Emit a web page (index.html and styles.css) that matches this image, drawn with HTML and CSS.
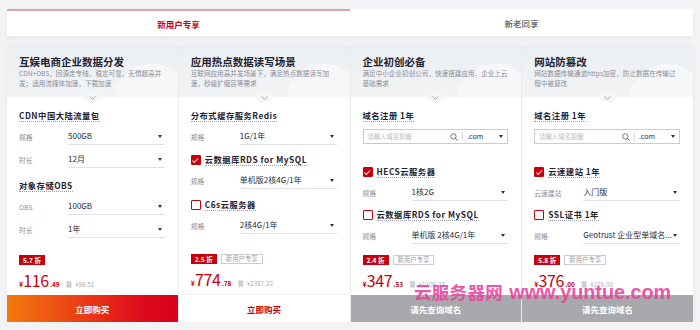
FILE: index.html
```html
<!DOCTYPE html>
<html lang="zh-CN">
<head>
    <meta charset="UTF-8">
    <title>新用户专享</title>
    <link rel="stylesheet" href="styles.css">
</head>
<body>
    <div class="page">
        <div class="tabs">
            <div class="tab active">新用户专享</div>
            <div class="tab">新老同享</div>
        </div>

        <div class="cards">
            <!-- card 1 -->
            <div class="card">
                <div class="card-head">
                    <h3>互娱电商企业数据分发</h3>
                    <p>CDN+OBS，回源走专线，稳定可靠，无惧超高并发；适用流媒体加速，下载加速</p>
                </div>
                <div class="card-body">
                    <span class="chev"><svg width="7" height="4" viewBox="0 0 7 4"><path d="M0.5 0.5 L3.5 3.3 L6.5 0.5" fill="none" stroke="#9aa0aa" stroke-width="0.9"/></svg></span>
                    <div class="sec"><span>CDN中国大陆流量包</span></div>
                    <div class="row"><span class="lbl">规格</span><span class="sel">500GB</span></div>
                    <div class="row"><span class="lbl">时长</span><span class="sel">12月</span></div>
                    <div class="sec sec-next"><span>对象存储OBS</span></div>
                    <div class="row"><span class="lbl">OBS</span><span class="sel">100GB</span></div>
                    <div class="row"><span class="lbl">时长</span><span class="sel">1年</span></div>
                    <div class="price-area">
                        <div class="tags"><span class="off">5.7 折</span></div>
                        <div class="price"><span class="cur">¥</span><span class="int">116</span><span class="dec">.49</span><span class="orig"><i>普</i>¥86.51</span></div>
                    </div>
                </div>
                <div class="buy buy-hot">立即购买</div>
            </div>

            <!-- card 2 -->
            <div class="card">
                <div class="card-head">
                    <h3>应用热点数据读写场景</h3>
                    <p>互联网应用高并发场景下，满足热点数据读写加速，秒级扩缩容等需求</p>
                </div>
                <div class="card-body">
                    <span class="chev"><svg width="7" height="4" viewBox="0 0 7 4"><path d="M0.5 0.5 L3.5 3.3 L6.5 0.5" fill="none" stroke="#9aa0aa" stroke-width="0.9"/></svg></span>
                    <div class="sec"><span>分布式缓存服务Redis</span></div>
                    <div class="row"><span class="lbl">规格</span><span class="sel">1G/1年</span></div>
                    <div class="sec sec-chk"><b class="box on"></b><span>云数据库RDS for MySQL</span></div>
                    <div class="row"><span class="lbl">规格</span><span class="sel">单机版2核4G/1年</span></div>
                    <div class="sec sec-chk2"><b class="box"></b><span>C6s云服务器</span></div>
                    <div class="row"><span class="lbl">规格</span><span class="sel">2核4G/1年</span></div>
                    <div class="price-area">
                        <div class="tags"><span class="off">2.5 折</span><span class="new">新用户专享</span></div>
                        <div class="price"><span class="cur">¥</span><span class="int">774</span><span class="dec">.78</span><span class="orig"><i>普</i>¥2387.22</span></div>
                    </div>
                </div>
                <div class="buy buy-plain">立即购买</div>
            </div>

            <!-- card 3 -->
            <div class="card">
                <div class="card-head">
                    <h3>企业初创必备</h3>
                    <p>满足中小企业初创公司，快速搭建应用，企业上云基础需求</p>
                </div>
                <div class="card-body">
                    <span class="chev"><svg width="7" height="4" viewBox="0 0 7 4"><path d="M0.5 0.5 L3.5 3.3 L6.5 0.5" fill="none" stroke="#9aa0aa" stroke-width="0.9"/></svg></span>
                    <div class="sec"><span>域名注册 1年</span></div>
                    <div class="domain">
                        <span class="ph">请输入域名前缀</span>
                        <svg class="search" width="8" height="8" viewBox="0 0 8 8"><circle cx="3.4" cy="3.4" r="2.7" fill="none" stroke="#555" stroke-width="0.8"/><path d="M5.4 5.4 L7.6 7.6" stroke="#555" stroke-width="0.9"/></svg>
                        <span class="suffix">.com</span>
                    </div>
                    <div class="sec sec-far"><b class="box on"></b><span>HECS云服务器</span></div>
                    <div class="row"><span class="lbl">规格</span><span class="sel">1核2G</span></div>
                    <div class="sec sec-chk3"><b class="box"></b><span>云数据库RDS for MySQL</span></div>
                    <div class="row"><span class="lbl">规格</span><span class="sel">单机版 2核4G/1年</span></div>
                    <div class="price-area">
                        <div class="tags"><span class="off">2.4 折</span><span class="new">新用户专享</span></div>
                        <div class="price"><span class="cur">¥</span><span class="int">347</span><span class="dec">.53</span><span class="orig"><i>普</i>¥1106.23</span></div>
                    </div>
                </div>
                <div class="buy buy-off">请先查询域名</div>
            </div>

            <!-- card 4 -->
            <div class="card">
                <div class="card-head">
                    <h3>网站防篡改</h3>
                    <p>网站数据传输通道https加密，防止数据在传输过程中被篡改</p>
                </div>
                <div class="card-body">
                    <span class="chev"><svg width="7" height="4" viewBox="0 0 7 4"><path d="M0.5 0.5 L3.5 3.3 L6.5 0.5" fill="none" stroke="#9aa0aa" stroke-width="0.9"/></svg></span>
                    <div class="sec"><span>域名注册 1年</span></div>
                    <div class="domain">
                        <span class="ph">请输入域名前缀</span>
                        <svg class="search" width="8" height="8" viewBox="0 0 8 8"><circle cx="3.4" cy="3.4" r="2.7" fill="none" stroke="#555" stroke-width="0.8"/><path d="M5.4 5.4 L7.6 7.6" stroke="#555" stroke-width="0.9"/></svg>
                        <span class="suffix">.com</span>
                    </div>
                    <div class="sec sec-far"><b class="box on"></b><span>云速建站 1年</span></div>
                    <div class="row"><span class="lbl">云速建站</span><span class="sel">入门版</span></div>
                    <div class="sec sec-chk3"><b class="box"></b><span>SSL证书 1年</span></div>
                    <div class="row"><span class="lbl">规格</span><span class="sel">Geotrust 企业型单域名...</span></div>
                    <div class="price-area">
                        <div class="tags"><span class="off">5.8 折</span><span class="new">新用户专享</span></div>
                        <div class="price"><span class="cur">¥</span><span class="int">376</span><span class="dec">.00</span><span class="orig"><i>普</i>¥276.00</span></div>
                    </div>
                </div>
                <div class="buy buy-off">请先查询域名</div>
            </div>
        </div>

        <div class="watermark">云服务器网 <span>www.yuntue.com</span></div>
    </div>
</body>
</html>
```

FILE: styles.css
```css
body { margin: 0; background: #f2f3f5; font-family: "Noto Sans CJK SC", "Noto Sans", sans-serif; color: #252b3a; }
.page { position: relative; width: 686px; padding: 9px 7px 0; }

.tabs { display: flex; height: 27px; box-shadow: 0 2px 5px rgba(0,0,0,0.06); }
.tab { flex: 1; background: #fff; display: flex; align-items: center; justify-content: center; font-size: 8.5px; color: #333; }
.tab.active { color: #c7000b; font-weight: bold; border-top: 2px solid #e0a3a6; height: 25px; }

.cards { display: grid; grid-template-columns: repeat(4, 1fr); margin-top: 9px; height: 277px; gap: 1px; background: #e9ebee; box-shadow: 0 2px 6px rgba(0,0,0,0.05); }
.card { display: flex; flex-direction: column; background: #fff; position: relative; overflow: hidden; }

.card-head { height: 52px; box-sizing: border-box; padding: 10px 12px 0; background: radial-gradient(circle at 85% 110%, #f6f7f9 0, #f6f7f9 38px, transparent 39px), linear-gradient(180deg, #eceff2, #f1f3f5); }
.card-head h3 { margin: 0; font-size: 10.5px; line-height: 13px; font-weight: bold; color: #1f2330; }
.card-head p { margin: 0; font-size: 6.6px; line-height: 10px; color: #8a8e99; }

.card-body { position: relative; flex: 1; display: flex; flex-direction: column; padding: 0 13px 0 12px; }
.chev { position: absolute; top: -3px; left: 50%; margin-left: -9px; width: 18px; height: 8px; border-radius: 0 0 9px 9px; background: #f4f5f7; display: flex; justify-content: center; align-items: center; }

.sec { display: flex; align-items: center; margin-top: 13px; font-size: 8.3px; line-height: 11px; font-weight: bold; letter-spacing: 0.5px; color: #1f2330; }
.sec span { border-bottom: 1px dotted #9ca0aa; }
.sec-next { margin-top: 12px; }
.sec-chk { margin-top: 9px; }
.sec-chk2 { margin-top: 10px; }
.sec-far { margin-top: 22px; }
.sec-chk3 { margin-top: 8px; }

.box { width: 8px; height: 8px; border: 1px solid #c7000b; border-radius: 1px; margin-right: 4px; background: #fff; position: relative; flex: none; }
.box.on { background: #c7000b; }
.box.on::after { content: ""; position: absolute; left: 2.5px; top: 0.5px; width: 2px; height: 4.5px; border: solid #fff; border-width: 0 1px 1px 0; transform: rotate(45deg); }

.row { display: flex; align-items: center; height: 17px; margin-top: 6px; }
.lbl { width: 49px; flex: none; font-size: 6.8px; color: #8a8e99; }
.sel { flex: 1; height: 16px; line-height: 16px; border-bottom: 1px solid #dfe1e6; font-size: 8px; color: #252b3a; position: relative; white-space: nowrap; overflow: hidden; padding-right: 8px; }
.sel::after { content: ""; position: absolute; right: 3px; top: 7px; border: 2.5px solid transparent; border-top: 3px solid #333; }

.domain { display: flex; align-items: center; margin-top: 7px; height: 15px; box-sizing: border-box; border: 1px solid #c9ccd3; padding: 0 4px; position: relative; }
.domain .ph { flex: 1; font-size: 6.3px; color: #b4b8c0; }
.domain .search { margin-right: 4px; }
.domain .suffix { width: 36px; border-left: 1px solid #d6d8dd; padding-left: 4px; font-size: 7px; color: #252b3a; position: relative; line-height: 9px; }
.domain .suffix::after { content: ""; position: absolute; right: 0; top: 3px; border: 2.5px solid transparent; border-top: 3px solid #333; }

.price-area { margin-top: auto; padding-bottom: 9px; }
.tags { display: flex; gap: 4px; height: 10px; }
.off { background: #c7000b; color: #fff; font-size: 6.6px; font-weight: bold; line-height: 10px; padding: 0 4px; }
.new { border: 1px solid #c9ccd3; color: #9aa0aa; font-size: 6.4px; line-height: 8px; padding: 0 4px; }
.price { display: flex; align-items: baseline; color: #c7000b; margin-top: 3px; height: 18px; }
.price .cur { font-size: 7px; font-weight: bold; }
.price .int { font-size: 16px; letter-spacing: -0.3px; }
.price .dec { font-size: 6.5px; font-weight: bold; margin-left: 1px; }
.price .orig { margin-left: 6px; font-size: 6.3px; color: #a9adb5; }
.price .orig i { font-style: normal; margin-right: 3px; }

.buy { height: 27px; display: flex; align-items: center; justify-content: center; font-size: 8.5px; font-weight: bold; color: #fff; }
.buy-hot { background: linear-gradient(90deg, #f37a0c 0%, #ea3b17 45%, #dd0a1c 80%, #d8001b 100%); }
.buy-plain { color: #c7000b; background: #fff; border-top: 1px solid #f0f1f3; }
.buy-off { background: #a8a9ad; }

.watermark { position: absolute; left: 414px; top: 279px; font-size: 17.5px; font-weight: bold; color: rgba(236, 64, 156, 0.9); letter-spacing: 0.3px; white-space: nowrap; }
.watermark span { font-family: "Liberation Sans", Arial, sans-serif; font-size: 19.8px; margin-left: 2px; letter-spacing: 0; }
```
